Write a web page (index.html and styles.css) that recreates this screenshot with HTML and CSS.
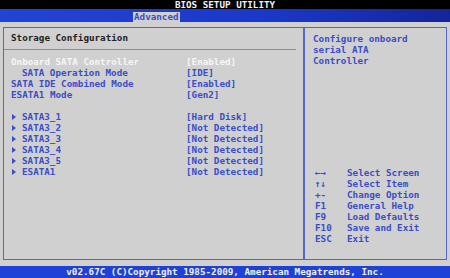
FILE: index.html
```html
<!DOCTYPE html>
<html lang="en">
<head>
    <meta charset="UTF-8">
    <title>BIOS Setup Utility</title>
    <link rel="stylesheet" href="styles.css">
</head>
<body>
    <div class="title-bar">BIOS SETUP UTILITY</div>
    <div class="menu-bar">
        <span class="menu-tab active">Advanced</span>
    </div>

    <div class="screen">
        <div class="frame">
            <div class="settings">
                <div class="section-title">Storage Configuration</div>
                <div class="rows">
                    <div class="row selected">
                        <span class="label">Onboard SATA Controller</span>
                        <span class="value">[Enabled]</span>
                    </div>
                    <div class="row">
                        <span class="label sub">SATA Operation Mode</span>
                        <span class="value">[IDE]</span>
                    </div>
                    <div class="row">
                        <span class="label">SATA IDE Combined Mode</span>
                        <span class="value">[Enabled]</span>
                    </div>
                    <div class="row">
                        <span class="label">ESATA1 Mode</span>
                        <span class="value">[Gen2]</span>
                    </div>
                    <div class="row blank"></div>
                    <div class="row">
                        <span class="label link">SATA3_1</span>
                        <span class="value">[Hard Disk]</span>
                    </div>
                    <div class="row">
                        <span class="label link">SATA3_2</span>
                        <span class="value">[Not Detected]</span>
                    </div>
                    <div class="row">
                        <span class="label link">SATA3_3</span>
                        <span class="value">[Not Detected]</span>
                    </div>
                    <div class="row">
                        <span class="label link">SATA3_4</span>
                        <span class="value">[Not Detected]</span>
                    </div>
                    <div class="row">
                        <span class="label link">SATA3_5</span>
                        <span class="value">[Not Detected]</span>
                    </div>
                    <div class="row">
                        <span class="label link">ESATA1</span>
                        <span class="value">[Not Detected]</span>
                    </div>
                </div>
            </div>

            <div class="help">
                <div class="help-text">
                    Configure onboard<br>
                    serial ATA<br>
                    Controller
                </div>
                <div class="keys">
                    <span class="key">←→</span><span>Select Screen</span>
                    <span class="key">↑↓</span><span>Select Item</span>
                    <span class="key">+-</span><span>Change Option</span>
                    <span class="key">F1</span><span>General Help</span>
                    <span class="key">F9</span><span>Load Defaults</span>
                    <span class="key">F10</span><span>Save and Exit</span>
                    <span class="key">ESC</span><span>Exit</span>
                </div>
            </div>
        </div>
    </div>

    <div class="footer">v02.67C (C)Copyright 1985-2009, American Megatrends, Inc.</div>
</body>
</html>
```

FILE: styles.css
```css
:root {
    --grey: #d0d0d0;
    --blue-text: #3a4dc8;
    --frame: #5565c8;
    --band: #1e42d8;
}

* {
    box-sizing: border-box;
    margin: 0;
    padding: 0;
}

body {
    width: 450px;
    height: 278px;
    overflow: hidden;
    display: flex;
    flex-direction: column;
    background-color: var(--grey);
    font-family: "DejaVu Sans Mono", monospace;
    font-size: 9.25px;
    font-weight: bold;
    line-height: 11px;
    color: var(--blue-text);
}

.title-bar {
    height: 9px;
    background-color: #000;
    color: #f2f2f2;
    text-align: center;
    line-height: 10px;
}

.menu-bar {
    height: 13px;
    background: linear-gradient(to right, #2244d6, #1a38c8 60%, #14259a);
    padding: 2px 0 0 133px;
}

.menu-tab {
    display: inline-block;
    height: 10px;
    padding: 0 1px;
    line-height: 10px;
}

.menu-tab.active {
    background-color: var(--grey);
    color: var(--blue-text);
}

.screen {
    flex: 1;
    padding: 5px 3px 6px 3px;
}

.frame {
    height: 100%;
    display: flex;
    border: 1px solid var(--frame);
}

.settings {
    width: 301px;
    border-right: 2px solid var(--frame);
    padding: 4px 0 0 0;
}

.section-title {
    color: #222;
    padding-left: 7px;
    padding-bottom: 6px;
    border-bottom: 1px solid #7e8bd0;
    margin-right: 7px;
}

.rows {
    padding: 6px 0 0 7px;
}

.row {
    display: grid;
    grid-template-columns: 175px auto;
    height: 11px;
}

.row.selected {
    color: #f6f6f6;
}

.label.sub,
.label.link {
    padding-left: 11px;
}

.label.link {
    position: relative;
}

.label.link::before {
    content: "";
    position: absolute;
    left: 1px;
    top: 3px;
    border-left: 4px solid var(--blue-text);
    border-top: 3px solid transparent;
    border-bottom: 3px solid transparent;
}

.help {
    flex: 1;
    display: flex;
    flex-direction: column;
    justify-content: space-between;
    padding: 5px 0 15px 8px;
}

.keys {
    display: grid;
    grid-template-columns: 32px auto;
    padding-left: 2px;
}

.footer {
    height: 12px;
    background-color: var(--band);
    color: #f0f0f0;
    text-align: center;
    line-height: 12px;
}
```
